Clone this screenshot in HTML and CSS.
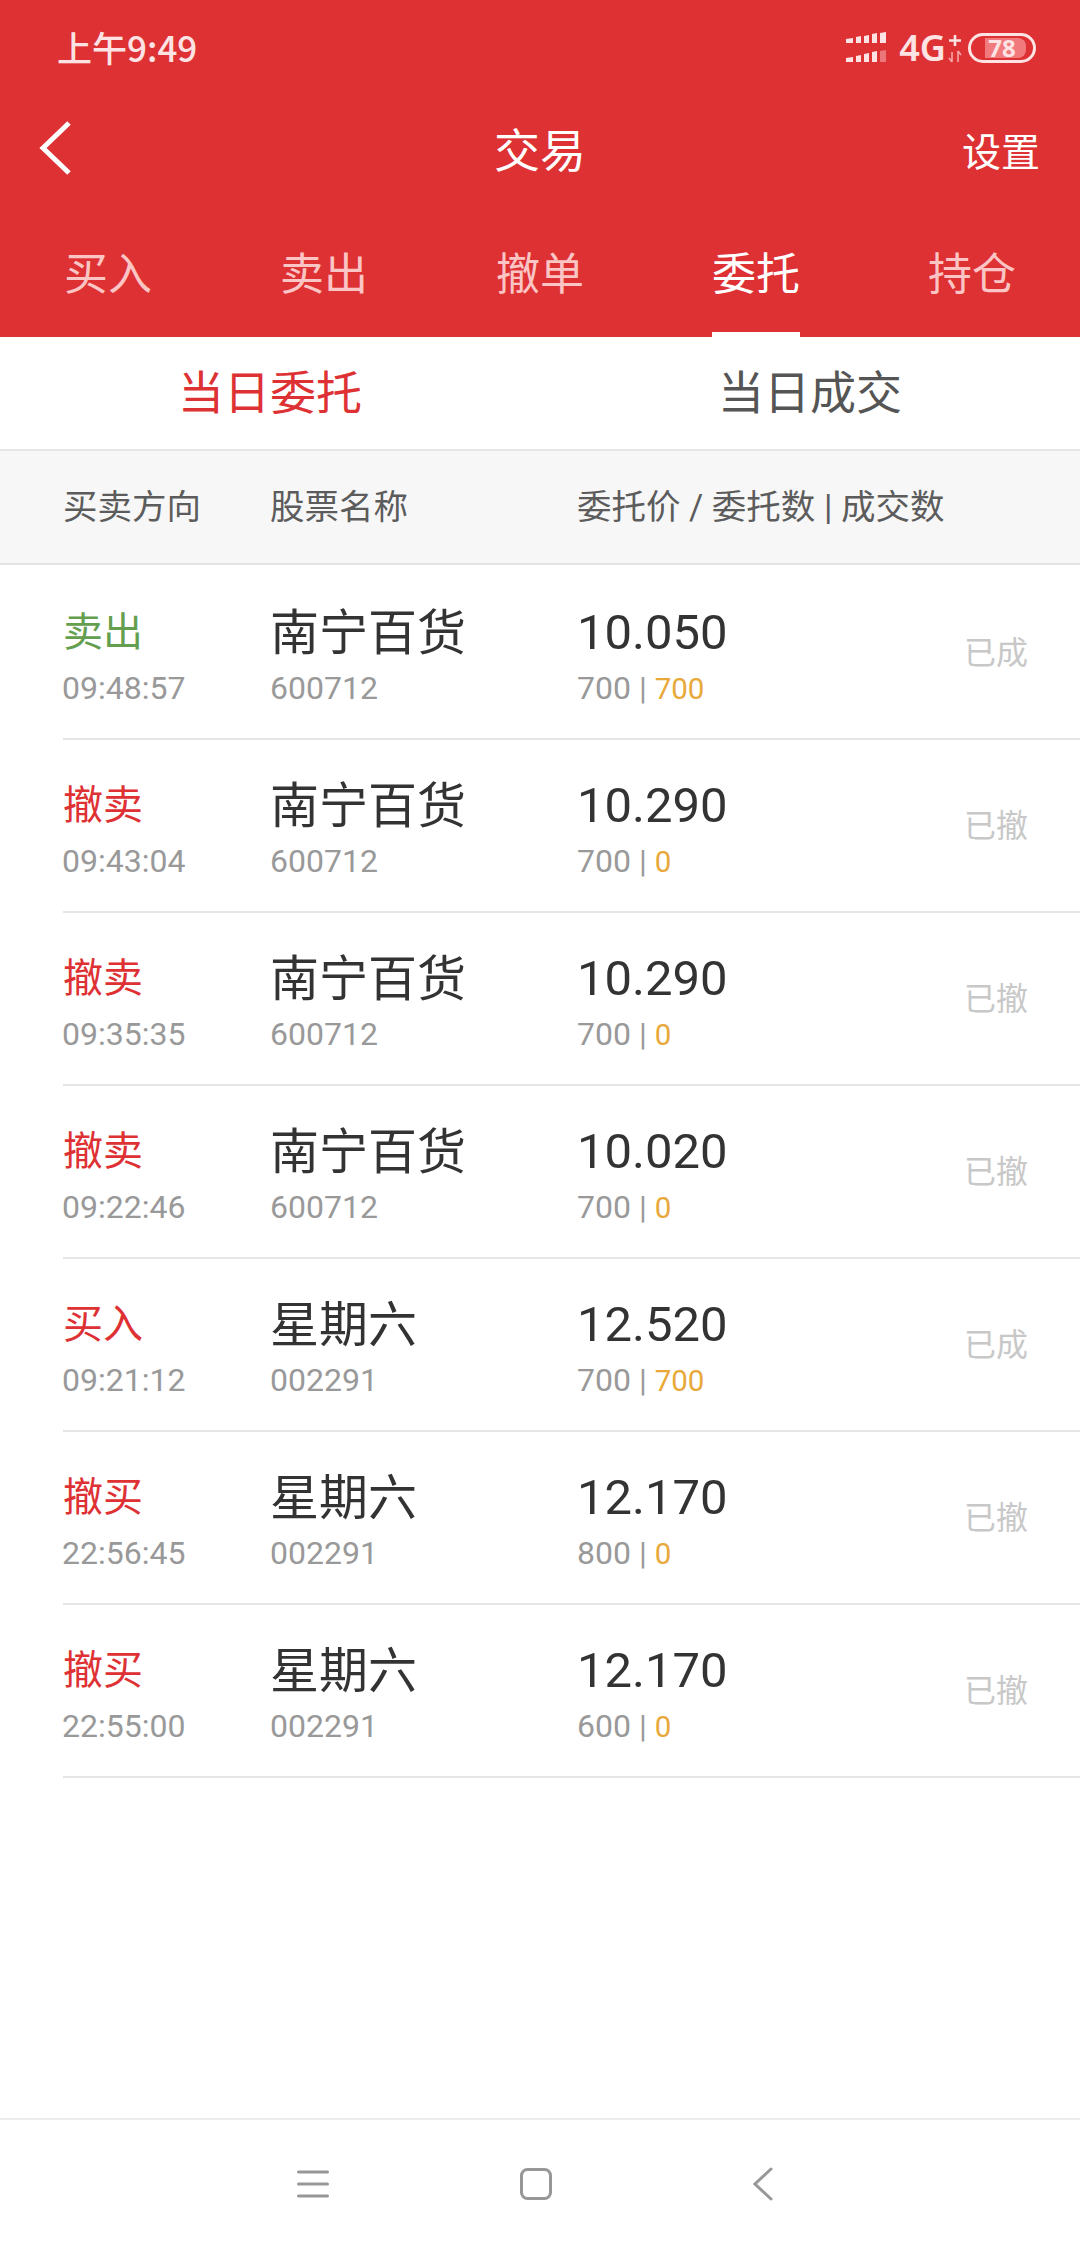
FILE: index.html
```html
<!DOCTYPE html>
<html lang="zh-CN">
<head>
<meta charset="utf-8">
<title>交易</title>
<link rel="stylesheet" href="styles.css">
</head>
<body>
<div class="page">
  <header class="top">
    <div class="status">
      <span class="clock">上午9:49</span>
      <div class="sys">
        <svg class="signal" width="42" height="32" viewBox="0 0 42 32"><g fill="#fde3e3"><path d="M1 7l7-1v5H1zM11 5l5-1v7h-5zM19 4l5-1v8h-5zM27 2l5-1v10h-5zM35 1l6-1v11h-6z"/><path d="M1 26l7-1v5H1zM11 24l5-1v7h-5zM19 22l5-1v9h-5zM27 20l5-1v11h-5z"/><path d="M35 19l6-1v12h-6z" opacity=".4"/></g></svg>
        <span class="net">4G</span>
        <svg class="netmark" width="16" height="30" viewBox="0 0 16 30"><path d="M8 2v11M2 7.5h12" stroke="#fde3e3" stroke-width="2.6" fill="none"/><path d="M5 19v10M2 25l3 4M11 29V18M11 18l3 4" stroke="#f4a5a5" stroke-width="1.6" fill="none"/></svg>
        <div class="battery"><div class="battery-fill"></div><span class="battery-num">78</span></div>
      </div>
    </div>
    <div class="bar">
      <svg class="back" width="36" height="56" viewBox="0 0 36 56"><path d="M31 3L5 28l26 25" fill="none" stroke="#fff" stroke-width="5"/></svg>
      <span class="title">交易</span>
      <span class="setting">设置</span>
    </div>
    <nav class="tabs">
      <span class="tab">买入</span>
      <span class="tab">卖出</span>
      <span class="tab">撤单</span>
      <span class="tab tab-on">委托</span>
      <span class="tab">持仓</span>
    </nav>
  </header>

  <div class="subtabs">
    <span class="subtab subtab-on">当日委托</span>
    <span class="subtab">当日成交</span>
  </div>

  <div class="thead">
    <span>买卖方向</span>
    <span>股票名称</span>
    <span>委托价 / 委托数 | 成交数</span>
  </div>

  <main class="list">
    <div class="row">
      <div class="cell"><span class="side green">卖出</span><span class="sub">09:48:57</span></div>
      <div class="cell"><span class="name">南宁百货</span><span class="sub">600712</span></div>
      <div class="cell"><span class="price">10.050</span><span class="sub">700 | <b class="qty">700</b></span></div>
      <span class="state">已成</span>
    </div>
    <div class="row">
      <div class="cell"><span class="side red">撤卖</span><span class="sub">09:43:04</span></div>
      <div class="cell"><span class="name">南宁百货</span><span class="sub">600712</span></div>
      <div class="cell"><span class="price">10.290</span><span class="sub">700 | <b class="qty">0</b></span></div>
      <span class="state">已撤</span>
    </div>
    <div class="row">
      <div class="cell"><span class="side red">撤卖</span><span class="sub">09:35:35</span></div>
      <div class="cell"><span class="name">南宁百货</span><span class="sub">600712</span></div>
      <div class="cell"><span class="price">10.290</span><span class="sub">700 | <b class="qty">0</b></span></div>
      <span class="state">已撤</span>
    </div>
    <div class="row">
      <div class="cell"><span class="side red">撤卖</span><span class="sub">09:22:46</span></div>
      <div class="cell"><span class="name">南宁百货</span><span class="sub">600712</span></div>
      <div class="cell"><span class="price">10.020</span><span class="sub">700 | <b class="qty">0</b></span></div>
      <span class="state">已撤</span>
    </div>
    <div class="row">
      <div class="cell"><span class="side red">买入</span><span class="sub">09:21:12</span></div>
      <div class="cell"><span class="name">星期六</span><span class="sub">002291</span></div>
      <div class="cell"><span class="price">12.520</span><span class="sub">700 | <b class="qty">700</b></span></div>
      <span class="state">已成</span>
    </div>
    <div class="row">
      <div class="cell"><span class="side red">撤买</span><span class="sub">22:56:45</span></div>
      <div class="cell"><span class="name">星期六</span><span class="sub">002291</span></div>
      <div class="cell"><span class="price">12.170</span><span class="sub">800 | <b class="qty">0</b></span></div>
      <span class="state">已撤</span>
    </div>
    <div class="row">
      <div class="cell"><span class="side red">撤买</span><span class="sub">22:55:00</span></div>
      <div class="cell"><span class="name">星期六</span><span class="sub">002291</span></div>
      <div class="cell"><span class="price">12.170</span><span class="sub">600 | <b class="qty">0</b></span></div>
      <span class="state">已撤</span>
    </div>
  </main>

  <footer class="nav">
    <svg width="32" height="30" viewBox="0 0 32 30"><path d="M1.5 3h29M1.5 15h29M1.5 27h29" stroke="#979797" stroke-width="3" stroke-linecap="round" fill="none"/></svg>
    <svg width="32" height="32" viewBox="0 0 32 32"><rect x="1.5" y="1.5" width="29" height="29" rx="6" fill="none" stroke="#979797" stroke-width="3"/></svg>
    <svg width="20" height="34" viewBox="0 0 20 34"><path d="M18 2L2 17l16 15" fill="none" stroke="#979797" stroke-width="3" stroke-linecap="round"/></svg>
  </footer>
</div>
</body>
</html>
```
FILE: styles.css
```css
* { box-sizing: border-box; }
html, body { margin: 0; padding: 0; background: #fff; }
body { font-family: Roboto, "Noto Sans CJK SC", sans-serif; }
.page { width: 1080px; height: 2248px; display: flex; flex-direction: column; overflow: hidden; }

.top { background: #de3134; height: 337px; display: flex; flex-direction: column; flex: none; }
.status { height: 96px; padding: 0 44px 0 57px; display: flex; align-items: center; justify-content: space-between; color: #fde3e3; }
.clock { font-size: 35px; font-weight: 500; line-height: 40px; font-family: "Noto Sans CJK SC", sans-serif; margin-top: -2px; }
.sys { display: flex; align-items: center; }
.signal { margin-right: 12px; }
.net { font-size: 36px; font-weight: 600; line-height: 40px; font-family: "Noto Sans", sans-serif; }
.netmark { margin: 0 5px 0 1px; }
.battery { position: relative; width: 68px; height: 30px; border: 3.5px solid #fde3e3; border-radius: 15px; display: flex; align-items: center; justify-content: center; }
.battery-fill { position: absolute; left: 14px; top: 2px; bottom: 2px; width: 41px; background: #f07a7c; border-radius: 0 8px 8px 0; }
.battery-num { position: relative; font-size: 24px; font-weight: 700; line-height: 24px; color: #fde3e3; font-family: "Noto Sans", sans-serif; }

.bar { height: 108px; padding: 0 40px 0 38px; display: flex; align-items: center; justify-content: space-between; position: relative; color: #fff; }
.back { margin-top: -4px; }
.title { position: absolute; left: 0; right: 0; top: 21px; text-align: center; font-size: 46px; line-height: 60px; font-family: "Noto Sans CJK SC", sans-serif; }
.setting { font-size: 39px; line-height: 50px; font-family: "Noto Sans CJK SC", sans-serif; margin-top: -2px; }

.tabs { flex: 1; display: grid; grid-template-columns: repeat(5, 1fr); }
.tab { justify-self: center; width: 88px; height: 100%; padding-top: 38px; font-size: 44px; line-height: 58px; text-align: center; white-space: nowrap; color: #fbc5c5; font-family: "Noto Sans CJK SC", sans-serif; display: flex; justify-content: center; }
.tab-on { color: #fff; border-bottom: 5px solid #fff; }

.subtabs { height: 114px; flex: none; display: grid; grid-template-columns: 1fr 1fr; border-bottom: 2px solid #e6e6e6; }
.subtab { padding-top: 22px; text-align: center; font-size: 46px; line-height: 60px; color: #555; font-family: "Noto Sans CJK SC", sans-serif; }
.subtab-on { color: #de3134; }

.thead { height: 114px; flex: none; background: #f7f7f7; border-bottom: 2px solid #e4e4e4; padding: 0 0 6px 63px; display: grid; grid-template-columns: 207px 307px 1fr; align-items: center; font-size: 34.5px; color: #5c5c5c; font-family: Roboto, "Noto Sans CJK SC", sans-serif; }

.list { flex: 1; }
.row { height: 173px; margin-left: 63px; padding-top: 31px; border-bottom: 2px solid #e6e6e6; display: grid; grid-template-columns: 208px 307px 1fr auto; }
.row:first-child { height: 175px; padding-top: 33px; }
.cell { display: flex; flex-direction: column; align-items: flex-start; }
.side { font-size: 40px; line-height: 62px; height: 67px; font-family: "Noto Sans CJK SC", sans-serif; }
.green { color: #649f4f; }
.red { color: #de3134; }
.name { font-size: 49px; line-height: 62px; height: 67px; color: #333; font-family: "Noto Sans CJK SC", sans-serif; margin-left: -1px; }
.price { font-size: 49px; line-height: 70px; height: 67px; color: #333; font-family: Roboto, sans-serif; margin-left: -1px; }
.sub { font-size: 32px; line-height: 46px; color: #999; font-family: Roboto, sans-serif; margin-left: -1px; }
.qty { font-weight: 400; font-size: 29.5px; color: #e8a93a; }
.state { align-self: center; margin: 0 52px 36px 0; font-size: 32px; line-height: 44px; color: #c8c8c8; font-family: "Noto Sans CJK SC", sans-serif; }

.nav { height: 130px; flex: none; border-top: 2px solid #ececec; display: grid; grid-template-columns: 528px 220px 1fr; align-items: center; }
.nav svg:nth-child(1) { margin-left: 297px; }
.nav svg:nth-child(2) { margin-left: -8px; }
.nav svg:nth-child(3) { margin-left: 5px; }
```
